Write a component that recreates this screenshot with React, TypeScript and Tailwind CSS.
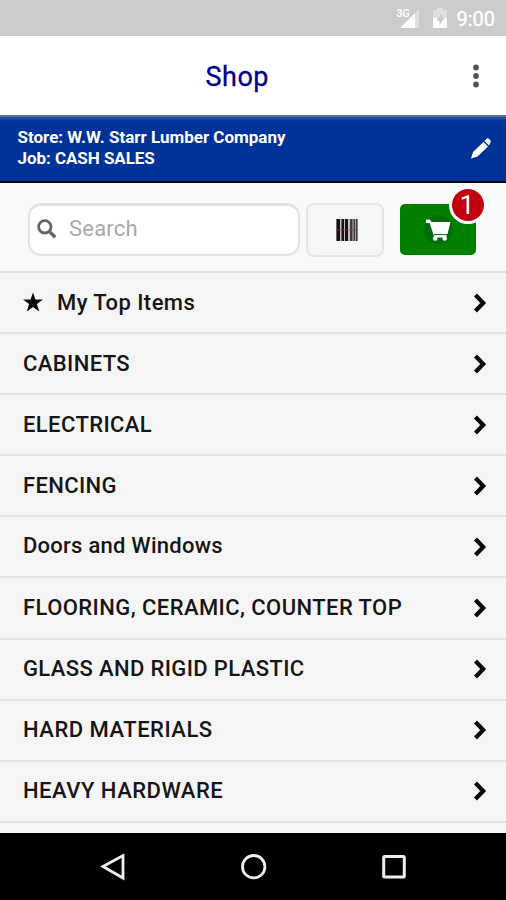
const categories = [
  { name: 'CABINETS', spacing: 'tracking-[0.4px]' },
  { name: 'ELECTRICAL', spacing: 'tracking-[0.4px]' },
  { name: 'FENCING', spacing: 'tracking-[0.35px]' },
  { name: 'Doors and Windows', spacing: 'mb-[2px] tracking-[0.25px]' },
  { name: 'FLOORING, CERAMIC, COUNTER TOP', spacing: 'tracking-[0.43px]' },
  { name: 'GLASS AND RIGID PLASTIC', spacing: 'tracking-[0.37px]' },
  { name: 'HARD MATERIALS', spacing: 'tracking-[0.5px]' },
  { name: 'HEAVY HARDWARE', spacing: 'tracking-[0.5px]' },
];

function StatusBar() {
  return (
    <div className="flex h-[36px] shrink-0 items-start justify-end bg-[#cbcbcb] text-white">
      <span className="mt-[8px] text-[11px] leading-[11px] font-medium tracking-[-0.3px]">3G</span>
      <svg className="-ml-[9px] mt-[9px] h-[20px] w-[20px]" viewBox="0 0 20 20">
        <path d="M15 4 19 0V19H15Z" fill="#fff" fillOpacity=".4" />
        <path d="M0 19 15 4V19Z" fill="#fff" />
      </svg>
      <svg className="mt-[8px] ml-[13px] h-[21px] w-[14px]" viewBox="0 0 14 21">
        <path d="M4 0h6v2h4v9H0V2h4z" fill="#fff" fillOpacity=".4" />
        <path d="M0 10h14v10H0z" fill="#fff" />
        <path d="M9 5 3 12.500h3.500v5L11.500 9.500H8.500z" fill="#cbcbcb" />
      </svg>
      <span className="mt-[8px] mr-[11px] ml-[9px] text-[20px] leading-[23px] [-webkit-text-stroke:0.3px_white]">9:00</span>
    </div>
  );
}

function TitleBar() {
  return (
    <header className="flex h-[79px] shrink-0 items-center justify-end bg-white pr-[26px]">
      <h1 className="mt-[2px] mr-[203px] text-[27px] leading-8 tracking-[0.5px] text-[#00008b] [-webkit-text-stroke:0.3px_#00008b]">Shop</h1>
      <svg className="h-[24px] w-[8px]" viewBox="0 0 8 24" fill="#555">
        <circle cx="4" cy="3.500" r="2.900" />
        <circle cx="4" cy="12" r="2.900" />
        <circle cx="4" cy="20.500" r="2.900" />
      </svg>
    </header>
  );
}

function StoreBanner() {
  return (
    <div className="flex h-[68px] shrink-0 items-start justify-between border-t-2 border-b-2 border-t-[#5a6f9f] border-b-black bg-linear-to-b from-[#2c50a8] to-[#003399] to-[4px] text-white">
      <div className="mt-[10px] ml-[17.500px] text-[17px] leading-[21px] font-bold">
        <p>Store: W.W. Starr Lumber Company</p>
        <p className="tracking-[-0.05px]">Job: CASH SALES</p>
      </div>
      <svg className="mt-[21px] mr-[15px] h-[21px] w-[20px]" viewBox="0 0 20 21" fill="#fff">
        <path d="M0 20.500 2 14 12.500 4 17 8.500 6.500 18.500Z" />
        <path d="M13.500 3 16 .6q1-.8 2 .2l1.500 1.700q.8 1-.2 2L18 7.500Z" />
      </svg>
    </div>
  );
}

function SearchRow() {
  return (
    <div className="flex h-[88px] shrink-0 items-start bg-[#f9f9f9] pt-[20px] pl-[28px]">
      <label className="flex h-[53px] w-[272px] items-center rounded-[13px] border-2 border-t-[3px] border-[#e2e2e2] bg-white pl-[7px]">
        <svg className="mb-[3px] h-[20px] w-[20px]" viewBox="0 0 20 20" fill="none" stroke="#666">
          <circle cx="7.800" cy="7.800" r="6.200" strokeWidth="2.800" />
          <path d="m12.200 12.200 6 6" strokeWidth="3.400" />
        </svg>
        <span className="mb-[3px] ml-[12px] text-[22px] leading-7 tracking-[0.2px] text-[#a9a9a9]">Search</span>
      </label>
      <button className="ml-[6px] flex h-[54px] w-[78px] items-center justify-center rounded-[8px] border-2 border-[#e6e6e6] bg-[#f6f6f6] pl-[3px]">
        <svg className="h-[22px] w-[22px]" viewBox="0 0 22 22">
          <path d="M0 0h22v22H0z" fill="#c4bfbf" />
          <path d="M.5 0h3.500v22H.5zM5.500 0h2.500v22H5.500zM9 0h3v22H9z" fill="#171313" />
          <path d="M14 0h2.500v22h-2.500zM17.500 0h1.700v22h-1.700zM20 0h1.500v22h-1.500z" fill="#403b3b" />
          <path d="M0 11h22" stroke="#a62d32" strokeOpacity=".7" />
        </svg>
      </button>
      <button className="relative mt-px ml-[16px] flex h-[51px] w-[76px] items-center justify-center rounded-[5px] bg-[#008000]">
        <span className="flex h-[29px] w-[29px] items-center justify-center rounded-full bg-[#006b08]">
          <svg className="h-[24px] w-[26px]" viewBox="0 0 26 24" fill="#fff">
            <path d="M1 1.500h4L6.500 4H25.500L22.500 16H21.500V19.500H9V18L4.500 5H1Z" />
            <path d="M9 16.600H22" stroke="#006b08" strokeWidth="1" />
            <circle cx="10.200" cy="20.500" r="2.300" />
            <circle cx="19.700" cy="20.500" r="2.300" />
          </svg>
        </span>
        <span className="absolute -top-[18px] -right-[11px] flex h-[38px] w-[38px] items-center justify-center rounded-full border-3 border-white bg-[#c3000d] pr-[2px] text-[26px] leading-none text-white">
          1
        </span>
      </button>
    </div>
  );
}

function Chevron() {
  return (
    <svg className="mr-[19px] ml-auto h-[20px] w-[14px]" viewBox="0 0 14 20" fill="none" stroke="#080808" strokeWidth="4.200">
      <path d="m2.500 2 7.700 8-7.700 8" />
    </svg>
  );
}

export default function App() {
  return (
    <main className="flex h-[900px] w-[506px] flex-col overflow-hidden bg-[#f5f5f5] font-[Roboto,sans-serif]">
      <StatusBar />
      <TitleBar />
      <StoreBanner />
      <SearchRow />
      <ul className="h-[562px] shrink-0 overflow-hidden text-[22px] leading-7 font-medium text-[#161616]">
        <li className="flex h-[61.1px] items-center border-t-2 border-[#e3e3e3] pl-[23px]">
          <svg className="mr-[14px] mb-px h-[20px] w-[20px]" viewBox="0 0 20 20" fill="#080808">
            <path d="m10 .5 2.400 7H20l-6.100 4.500 2.300 7.400L10 15l-6.200 4.400L6.100 12 0 7.500h7.600Z" />
          </svg>
          <span className="tracking-[0.43px]">My Top Items</span>
          <Chevron />
        </li>
        {categories.map(({ name, spacing }) => (
          <li key={name} className="flex h-[61.1px] items-center border-t-2 border-[#e3e3e3] pl-[23px]">
            <span className={spacing}>{name}</span>
            <Chevron />
          </li>
        ))}
        <li className="h-[61px] border-t-2 border-[#e3e3e3]" />
      </ul>
      <nav className="flex h-[67px] shrink-0 items-center bg-black pl-[100px]">
        <svg className="h-[28px] w-[25px]" viewBox="0 0 25 28" fill="none" stroke="#eee" strokeWidth="2.800">
          <path d="M3 13.500 23 2.500v22.500Z" />
        </svg>
        <svg className="ml-[115px] h-[28px] w-[28px]" viewBox="0 0 28 28" fill="none" stroke="#eee" strokeWidth="2.800">
          <circle cx="13.700" cy="13.700" r="11.200" />
        </svg>
        <svg className="ml-[112px] h-[28px] w-[28px]" viewBox="0 0 28 28" fill="none" stroke="#eee" strokeWidth="3">
          <rect x="3.700" y="3.500" width="20.600" height="20.600" rx="1" />
        </svg>
      </nav>
    </main>
  );
}
